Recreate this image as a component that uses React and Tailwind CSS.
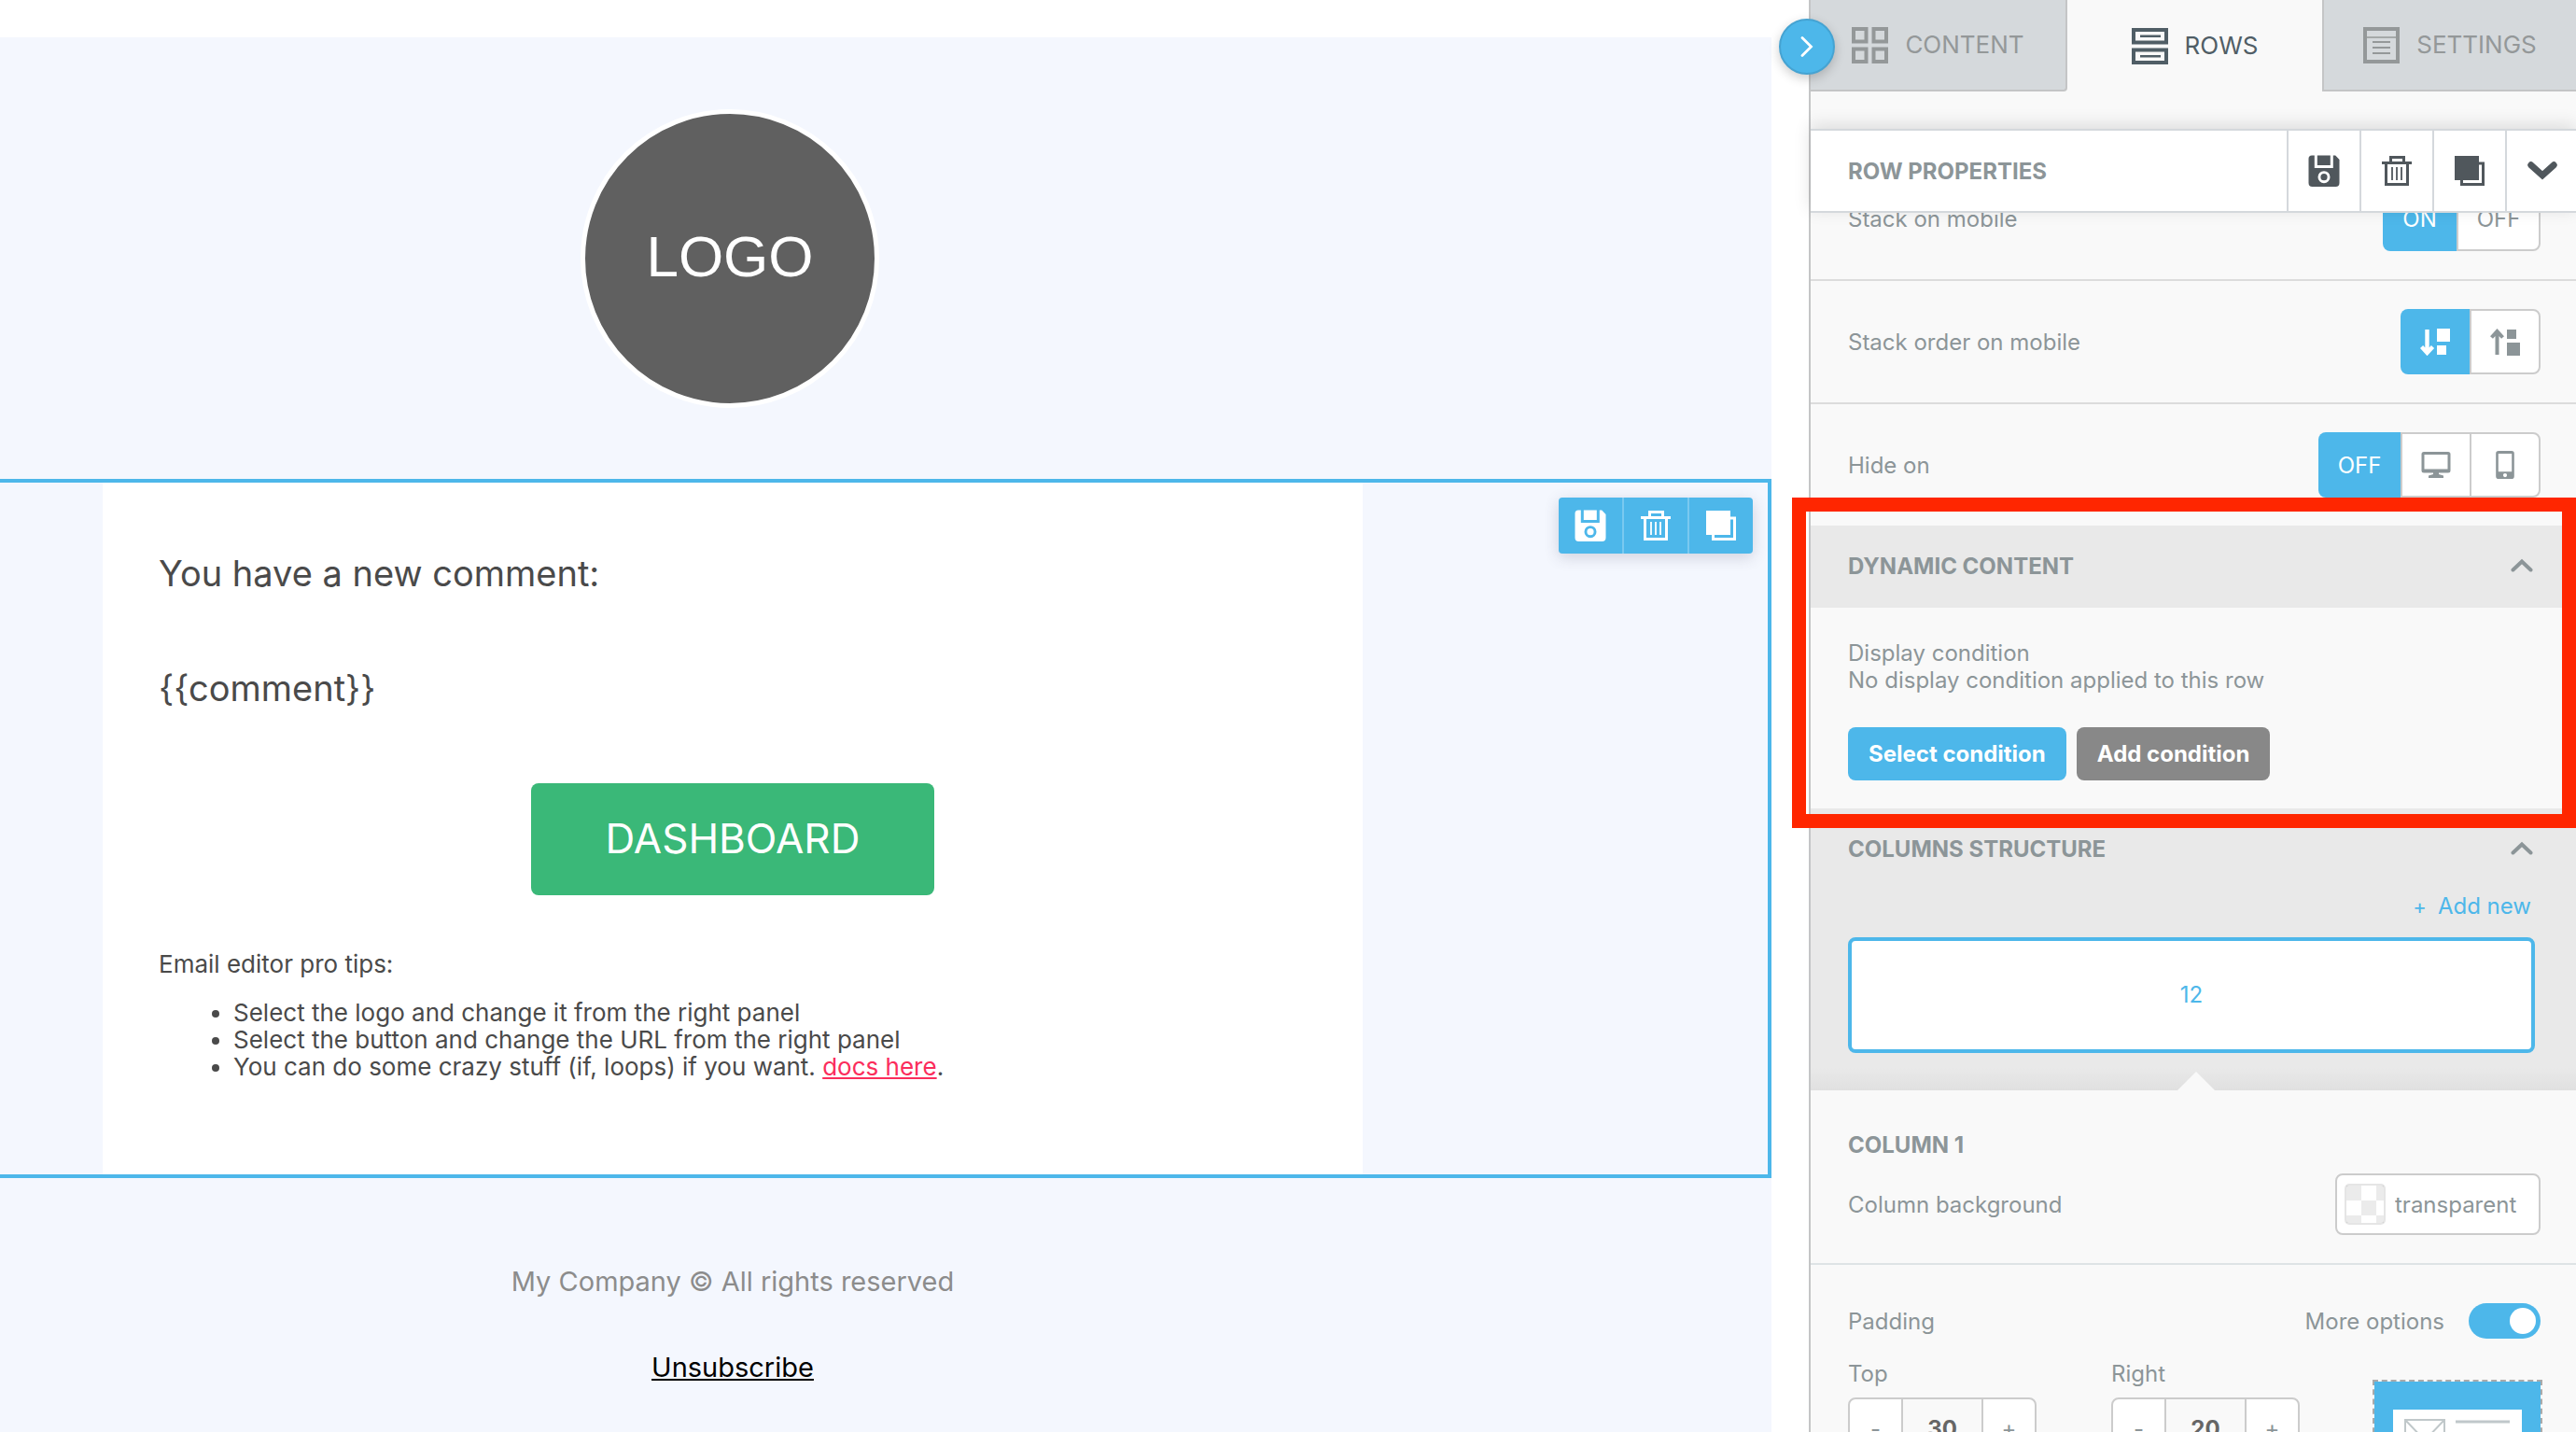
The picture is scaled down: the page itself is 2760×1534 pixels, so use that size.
function GridIcon() {
  return (
    <svg width="39" height="39" viewBox="0 0 39 39" fill="none" stroke="currentColor" strokeWidth="4" aria-hidden="true">
      <rect x="2" y="2" width="13.5" height="13.5" />
      <rect x="23.5" y="2" width="13.5" height="13.5" />
      <rect x="2" y="23.5" width="13.5" height="13.5" />
      <rect x="23.5" y="23.5" width="13.5" height="13.5" />
    </svg>
  );
}

function RowsIcon() {
  return (
    <svg width="39" height="39" viewBox="0 0 39 39" fill="none" stroke="currentColor" strokeWidth="4" aria-hidden="true">
      <rect x="2" y="2" width="35" height="13.5" />
      <rect x="2" y="23.5" width="35" height="13.5" />
      <path d="M9 8.8h22M9 30.2h22" strokeWidth="2.6" />
    </svg>
  );
}

function FormIcon() {
  return (
    <svg width="39" height="39" viewBox="0 0 39 39" fill="none" stroke="currentColor" strokeWidth="4" aria-hidden="true">
      <rect x="2" y="2" width="35" height="35" />
      <path d="M2 11h35" strokeWidth="1.6" />
      <path d="M10 16h19M10 22h19M10 28h19" strokeWidth="2" />
    </svg>
  );
}

function SaveIcon() {
  return (
    <svg width="34" height="34" viewBox="0 0 34 34" fill="currentColor" aria-hidden="true">
      <path
        fillRule="evenodd"
        d="M4 .5h2.8V14h20V.5h2.4L33.5 5v25a4 4 0 0 1-4 4H4.500a4 4 0 0 1-4-4V4a3.500 3.500 0 0 1 3.500-3.500ZM17 17.200a6.500 6.500 0 1 0 0 13 6.500 6.500 0 0 0 0-13Z"
      />
      <rect x="9.800" y=".5" width="14" height="10.500" />
      <circle cx="17" cy="23.700" r="3.600" />
    </svg>
  );
}

function TrashIcon() {
  return (
    <svg width="32" height="32" viewBox="0 0 32 32" fill="none" stroke="currentColor" strokeWidth="3" aria-hidden="true">
      <path d="M0 7.500h32M9.500 7.500v-6h14v6M4.500 7.500v23h23v-23" />
      <path d="M11 12v14M16 12v14M21 12v14" strokeWidth="1.800" />
    </svg>
  );
}

function CopyIcon() {
  return (
    <svg width="32" height="32" viewBox="0 0 32 32" fill="none" stroke="currentColor" strokeWidth="3" aria-hidden="true">
      <rect x="0" y="0" width="26" height="26" fill="currentColor" stroke="none" />
      <path d="M26 8h4.500v22.500h-23V26" />
    </svg>
  );
}

function ChevronDownIcon() {
  return (
    <svg width="32" height="22" viewBox="0 0 32 22" fill="none" stroke="currentColor" strokeWidth="7" strokeLinecap="round" aria-hidden="true">
      <path d="M3.800 4.800 16 15.800 28.200 4.800" />
    </svg>
  );
}

function ChevronUpIcon() {
  return (
    <svg width="24" height="16" viewBox="0 0 24 16" fill="none" stroke="currentColor" strokeWidth="4" strokeLinecap="round" aria-hidden="true">
      <path d="M2.500 12.500 12 3.500l9.500 9" />
    </svg>
  );
}

function StackDownIcon() {
  return (
    <svg width="32" height="29" viewBox="0 0 32 29" aria-hidden="true">
      <path d="M7.500 1v24M1.500 19.500l6 6.500 6-6.500" fill="none" stroke="currentColor" strokeWidth="4.400" />
      <path d="M18 0h14v14H18zM18 18h10v10H18z" fill="currentColor" />
    </svg>
  );
}

function StackUpIcon() {
  return (
    <svg width="32" height="29" viewBox="0 0 32 29" aria-hidden="true">
      <path d="M7.500 28V4M1.500 9.500l6-6.500 6 6.500" fill="none" stroke="currentColor" strokeWidth="4" />
      <path d="M18 1h10v10H18zM18 15h14v14H18z" fill="currentColor" />
    </svg>
  );
}

function DesktopIcon() {
  return (
    <svg width="32" height="28" viewBox="0 0 32 28" fill="currentColor" aria-hidden="true">
      <path fillRule="evenodd" d="M3 0h26a2.500 2.500 0 0 1 2.500 2.500V20a2.500 2.500 0 0 1-2.500 2.500H3A2.500 2.500 0 0 1 .5 20V2.500A2.500 2.500 0 0 1 3 0Zm.5 3v15.500h25V3Z" />
      <path d="M13 22h6v2l5 1.500V28H8v-2.500l5-1.500z" />
    </svg>
  );
}

function PhoneIcon() {
  return (
    <svg width="20" height="30" viewBox="0 0 20 30" fill="currentColor" aria-hidden="true">
      <path fillRule="evenodd" d="M3 0h14a2.800 2.800 0 0 1 2.800 2.800v24.400A2.800 2.800 0 0 1 17 30H3a2.800 2.800 0 0 1-2.800-2.800V2.800A2.800 2.800 0 0 1 3 0Zm-.2 3v19.200h14.400V3ZM10 24a2.100 2.100 0 1 0 0 4.200 2.100 2.100 0 0 0 0-4.200Z" />
    </svg>
  );
}

function Tab({ icon, label, className, selected = false }) {
  return (
    <button type="button" role="tab" aria-selected={selected} className={`flex h-[98px] items-center justify-center gap-[18px] text-[26px] leading-8 ${className}`}>
      {icon}
      {label}
    </button>
  );
}

function Property({ label, className = "", children }) {
  return (
    <div className={`flex items-center justify-between pr-[38px] pl-10 ${className}`}>
      <span>{label}</span>
      {children}
    </div>
  );
}

const onSegment = "flex items-center justify-center bg-[#4db7ea] text-white";
const offSegment = "flex items-center justify-center border-2 border-[#ccc] bg-white";

function Segments({ label, children }) {
  return (
    <div role="group" aria-label={label} className="flex h-[70px]">
      {children}
    </div>
  );
}

function SectionHeader({ title }) {
  return (
    <button type="button" aria-expanded="true" className="flex h-[88px] w-full items-center justify-between bg-[#e9e9e9] pr-[46px] pb-0.5 pl-10 font-bold">
      {title}
      <ChevronUpIcon />
    </button>
  );
}

function Stepper({ id, label, value }) {
  return (
    <div className="w-[202px]">
      <label htmlFor={id} className="block leading-[50px]">{label}</label>
      <div className="flex h-[66px] overflow-hidden rounded-lg border-2 border-[#ccc] bg-white">
        <button type="button" aria-label={`Decrease ${label}`} className="w-[55px]">-</button>
        <input id={id} defaultValue={value} className="min-w-0 flex-1 border-x-2 border-[#ccc] bg-[#f9f9f9] text-center font-bold text-[#666]" />
        <button type="button" aria-label={`Increase ${label}`} className="w-[55px]">+</button>
      </div>
    </div>
  );
}

function Email() {
  return (
    <main className="mt-10 mr-10 min-w-0 flex-1 overflow-hidden bg-[#f4f7fe] text-[#4a4a4a]">
      <section className="flex h-[473px] max-w-[1460px] items-center pr-1.5 pl-[110px]">
        <div className="mx-auto flex size-80 items-center justify-center rounded-full border-[5px] border-white bg-[#606060] pb-1 font-['Liberation_Sans',sans-serif] text-[62px] text-white">
          LOGO
        </div>
      </section>

      <section className="relative border-y-4 border-r-4 border-[#4db7ea] pl-[110px]">
        <div className="max-w-[1350px] bg-white px-[60px] pt-[70px] pb-[101px]">
          <h1 className="text-[38px] leading-[54px]">You have a new comment:</h1>
          <p className="mt-[69px] text-[38px] leading-[54px]">{"{{comment}}"}</p>
          <button type="button" className="mx-auto mt-[75px] flex h-[120px] w-[432px] items-center justify-center rounded-lg bg-[#3ab878] pb-0.5 text-[44px] text-white">
            DASHBOARD
          </button>
          <p className="mt-[59px] text-[26px] leading-[29px]">Email editor pro tips:</p>
          <ul className="mt-[23px] list-disc pl-20 text-[26px] leading-[29px]">
            <li>Select the logo and change it from the right panel</li>
            <li>Select the button and change the URL from the right panel</li>
            <li>
              You can do some crazy stuff (if, loops) if you want.{" "}
              <a href="#docs" className="text-[#fb2d5b] underline">docs here</a>.
            </li>
          </ul>
        </div>
        <div className="absolute top-4 right-4 flex h-[60px] divide-x-2 divide-[#79c9f0] rounded bg-[#4db7ea] text-white shadow-[0_4px_16px_rgba(60,60,90,0.2)]">
          <button type="button" aria-label="Save row" className="flex w-[70px] items-center justify-center"><SaveIcon /></button>
          <button type="button" aria-label="Delete row" className="flex w-[70px] items-center justify-center"><TrashIcon /></button>
          <button type="button" aria-label="Duplicate row" className="flex w-[68px] items-center justify-center"><CopyIcon /></button>
        </div>
      </section>

      <footer className="max-w-[1460px] pt-[91px] pl-[110px] text-center text-[29px] leading-10">
        <p className="text-[#8c8c8c]">My Company © All rights reserved</p>
        <p className="mt-[52px]">
          <a href="#unsubscribe" className="text-black underline">Unsubscribe</a>
        </p>
      </footer>
    </main>
  );
}

function Panel() {
  return (
    <aside className="relative flex w-[822px] shrink-0 flex-col border-l-2 border-[#c4c5c6] bg-[#f9f9f9] text-[24px] leading-[29px] text-[#8c9598]">
      <button type="button" aria-label="Collapse panel" className="absolute top-5 -left-[34px] z-20 flex size-[60px] items-center justify-center rounded-full border-2 border-[#45a3d2] bg-[#4db7ea] text-white shadow-[0_4px_12px_rgba(0,0,0,0.2)]">
        <svg width="14" height="22" viewBox="0 0 14 22" fill="none" stroke="currentColor" strokeWidth="2.800" strokeLinecap="round" aria-hidden="true">
          <path d="M2 1.500 11.500 11 2 20.500" />
        </svg>
      </button>

      <div role="tablist" className="grid shrink-0 grid-cols-[275fr_273fr_272fr]">
        <Tab icon={<GridIcon />} label="CONTENT" className="rounded-br-[4px] border-r-2 border-b-2 border-[#c4c5c6] bg-[#d5d9dc] text-[#949899]" />
        <Tab icon={<RowsIcon />} label="ROWS" selected className="text-[#505e66]" />
        <Tab icon={<FormIcon />} label="SETTINGS" className="border-b-2 border-l-2 border-[#c4c5c6] bg-[#d5d9dc] text-[#949899]" />
      </div>

      <header className="z-10 mt-10 flex h-[90px] shrink-0 items-stretch border-y-2 border-[#d4d8dc] bg-white shadow-[0_-4px_18px_rgba(0,0,0,0.12)]">
        <h2 className="flex flex-1 items-center pl-10 font-bold">ROW PROPERTIES</h2>
        <div className="flex divide-x-2 divide-[#d4d8dc] border-l-2 border-[#d4d8dc] text-[#50575c]">
          <button type="button" aria-label="Save" className="flex w-[78px] items-center justify-center"><SaveIcon /></button>
          <button type="button" aria-label="Delete" className="flex w-[78px] items-center justify-center"><TrashIcon /></button>
          <button type="button" aria-label="Duplicate" className="flex w-[78px] items-center justify-center"><CopyIcon /></button>
          <button type="button" aria-label="Close properties" className="flex w-[74px] items-center justify-center pl-0.5"><ChevronDownIcon /></button>
        </div>
      </header>

      <div className="min-h-0 flex-1 [overflow-y:clip]">
        <Property label="Stack on mobile" className="-mt-[59px] h-[132px] border-b-2 border-[#dcdcdc]">
          <Segments label="Stack on mobile">
            <button type="button" aria-pressed="true" className={`${onSegment} w-[79px] rounded-l-lg`}>ON</button>
            <button type="button" className={`${offSegment} w-[90px] rounded-r-lg`}>OFF</button>
          </Segments>
        </Property>
        <Property label="Stack order on mobile" className="h-[132px] border-b-2 border-[#dcdcdc]">
          <Segments label="Stack order on mobile">
            <button type="button" aria-pressed="true" aria-label="Top to bottom" className={`${onSegment} w-[74px] rounded-l-lg`}><StackDownIcon /></button>
            <button type="button" aria-label="Bottom to top" className={`${offSegment} w-[76px] rounded-r-lg`}><StackUpIcon /></button>
          </Segments>
        </Property>
        <Property label="Hide on" className="h-[130px]">
          <Segments label="Hide on">
            <button type="button" aria-pressed="true" className={`${onSegment} w-[88px] rounded-l-lg`}>OFF</button>
            <button type="button" aria-label="Desktop" className={`${offSegment} w-[74px] border-r-0`}><DesktopIcon /></button>
            <button type="button" aria-label="Mobile" className={`${offSegment} w-[76px] rounded-r-lg`}><PhoneIcon /></button>
          </Segments>
        </Property>

        <section className="relative">
          <SectionHeader title="DYNAMIC CONTENT" />
          <div className="px-10 pt-[34px] pb-[30px]">
            <p>Display condition</p>
            <p>No display condition applied to this row</p>
            <div className="mt-9 flex gap-[11px] font-bold text-white">
              <button type="button" className="h-[57px] rounded-lg bg-[#4db7ea] px-[22px]">Select condition</button>
              <button type="button" className="h-[57px] rounded-lg bg-[#888] px-[22px]">Add condition</button>
            </div>
          </div>
          <div className="pointer-events-none absolute -top-[30px] right-0 -bottom-[21px] -left-5 border-[15px] border-[#ff2600]" />
        </section>

        <section className="bg-[#e9e9e9]">
          <SectionHeader title="COLUMNS STRUCTURE" />
          <div className="bg-linear-to-t from-[#e0e0e0] to-transparent to-[24px] pt-0.5 pr-11 pl-10">
            <div className="flex justify-end pr-1">
              <button type="button" className="flex items-baseline gap-3 text-[#4db7ea]">
                <span className="text-[22px]">+</span>Add new
              </button>
            </div>
            <button type="button" className="mt-[18px] flex h-[124px] w-full items-center justify-center rounded-lg border-4 border-[#4db7ea] bg-white pb-0.5 text-[#4db7ea]">
              12
            </button>
            <div className="pt-5 pl-2.5">
              <svg className="mx-auto block" width="40" height="20" viewBox="0 0 40 20" aria-hidden="true">
                <path d="M0 20 20 0l20 20z" fill="#f9f9f9" />
              </svg>
            </div>
          </div>
        </section>

        <section>
          <h3 className="pt-11 pl-10 font-bold">COLUMN 1</h3>
          <div className="flex items-center justify-between border-b-2 border-[#dee3e6] pt-4 pr-[38px] pb-[30px] pl-10">
            <label htmlFor="column-background">Column background</label>
            <div className="flex h-[66px] w-[220px] items-center gap-2.5 rounded-lg border-2 border-[#ccc] bg-white pl-2">
              <svg width="44" height="44" viewBox="0 0 44 44" aria-hidden="true">
                <rect width="44" height="44" rx="4" fill="#fff" />
                <path d="M2 2h16v16H2zM34 2h8v16h-8zM18 18h16v16H18zM2 34h16v8H2zM34 34h8v8h-8z" fill="#ebebeb" />
                <rect x="1" y="1" width="42" height="42" rx="4" fill="none" stroke="#000" strokeOpacity=".1" strokeWidth="2" />
              </svg>
              <input id="column-background" defaultValue="transparent" className="min-w-0 flex-1 bg-transparent" />
            </div>
          </div>

          <div className="flex h-[120px] items-center pr-[38px] pl-10">
            <span className="flex-1">Padding</span>
            <label htmlFor="more-options" className="mr-[26px]">More options</label>
            <input
              id="more-options"
              type="checkbox"
              defaultChecked
              className="flex h-[38px] w-[77px] appearance-none items-center justify-end rounded-full bg-[#4db7ea] pr-[5px] before:size-7 before:rounded-full before:bg-white"
            />
          </div>

          <div className="-mt-7 flex items-start pr-9 pl-10">
            <div className="flex flex-1 gap-20">
              <Stepper id="padding-top" label="Top" value="30" />
              <Stepper id="padding-right" label="Right" value="20" />
            </div>
            <div className="mt-[31px] h-[180px] w-[182px] border-2 border-dashed border-[#aaa] bg-[#4db7ea] bg-clip-padding px-5 pt-[30px]">
              <svg className="block" width="138" height="120" viewBox="0 0 138 120" fill="none" stroke="#c0c8ca" strokeWidth="2" aria-hidden="true">
                <rect width="138" height="120" fill="#fff" stroke="none" />
                <path d="M13 11h42v42H13zM13 11l21 22 21-22M13 53l21-20 21 20" />
                <path d="M67 13h58M67 31h58M67 49h58" strokeWidth="3" />
              </svg>
            </div>
          </div>
        </section>
      </div>
    </aside>
  );
}

export default function App() {
  return (
    <div className="flex h-screen overflow-hidden bg-white font-['Inter',sans-serif]">
      <Email />
      <Panel />
    </div>
  );
}
